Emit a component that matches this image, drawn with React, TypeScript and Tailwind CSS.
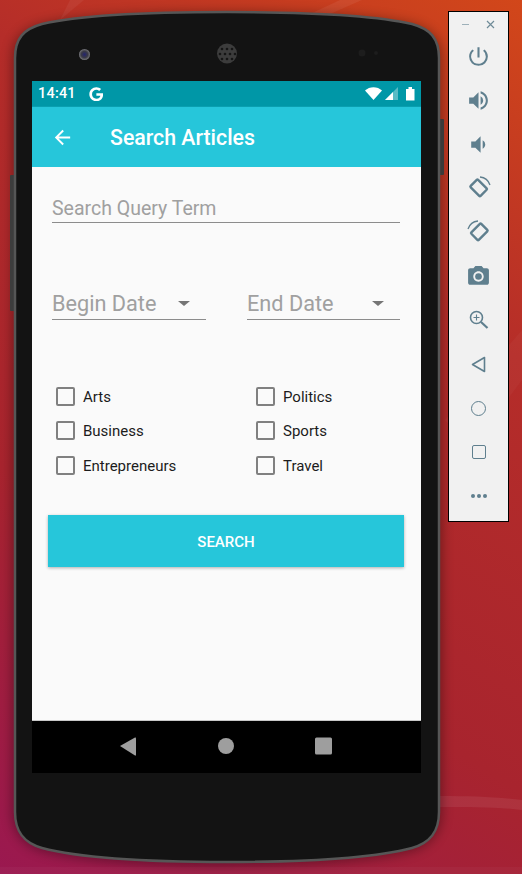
import { MdPowerSettingsNew, MdVolumeUp, MdVolumeDown, MdPhotoCamera, MdArrowBack } from 'react-icons/md';
import { FaGoogle } from 'react-icons/fa';

const TOPICS = [
    ['Arts', 'Politics'],
    ['Business', 'Sports'],
    ['Entrepreneurs', 'Travel'],
];

function PhoneBody() {
    return (
        <svg className="absolute left-0 top-0" width="522" height="874" viewBox="0 0 522 874">
            <defs>
                <radialGradient id="lens">
                    <stop offset="0" stopColor="#24246e" />
                    <stop offset="0.6" stopColor="#3a3a44" />
                    <stop offset="1" stopColor="#77777c" />
                </radialGradient>
                <filter id="soft" x="-10%" y="-10%" width="120%" height="120%">
                    <feGaussianBlur stdDeviation="6" />
                </filter>
            </defs>
            <path
                d="M12 58 C12 38 24 29 42 24 C80 15 150 12 227 12 C304 12 374 15 412 24 C430 29 442 38 442 58 L442 812 C442 832 430 846 412 851 C374 861 304 866 227 866 C150 866 80 861 42 851 C24 846 12 832 12 812 Z"
                fill="#000000"
                opacity="0.35"
                filter="url(#soft)"
            />
            {/* side buttons */}
            <rect x="10" y="175" width="5" height="136" rx="1" fill="#3d3d3d" />
            <rect x="438" y="119" width="6" height="56" rx="1" fill="#3a3a3a" />
            <path
                d="M15 58 C15 38 24 29 42 24 C80 15 150 12 227 12 C304 12 374 15 412 24 C430 29 439 38 439 58 L439 812 C439 832 430 843 412 848 C374 858 304 862 227 862 C150 862 80 858 42 848 C24 843 15 832 15 812 Z"
                fill="#131313"
                stroke="#565656"
                strokeWidth="2.5"
            />
            {/* camera, earpiece, sensors */}
            <circle cx="84.5" cy="54.5" r="5.5" fill="url(#lens)" />
            <circle cx="227" cy="53.5" r="10" fill="#3c3c3c" />
            <g fill="#151515">
                <circle cx="222" cy="49" r="1.3" />
                <circle cx="227" cy="49" r="1.3" />
                <circle cx="232" cy="49" r="1.3" />
                <circle cx="220" cy="54" r="1.3" />
                <circle cx="225" cy="54" r="1.3" />
                <circle cx="230" cy="54" r="1.3" />
                <circle cx="235" cy="54" r="1.3" />
                <circle cx="222" cy="59" r="1.3" />
                <circle cx="227" cy="59" r="1.3" />
                <circle cx="232" cy="59" r="1.3" />
            </g>
            <circle cx="362" cy="53" r="3.5" fill="#1d1d1d" />
            <circle cx="376" cy="53" r="2" fill="#1d1d1d" />
        </svg>
    );
}

function Wallpaper() {
    return (
        <svg className="absolute left-0 top-0" width="522" height="874" viewBox="0 0 522 874">
            <path d="M70 0 L84 0 L60 20 Z" fill="#ffffff" opacity="0.05" />
            <path d="M310 14 L340 0 L362 0 L330 14 Z" fill="#ffffff" opacity="0.06" />
            <path d="M440 796 C470 796 500 797 522 800 L522 810 C500 807 470 807 440 807 Z" fill="#ffffff" opacity="0.07" />
            <path d="M445 420 L522 330 L522 380 L470 450 Z" fill="#ffffff" opacity="0.03" />
            <rect x="0" y="867" width="522" height="7" fill="#ffffff" opacity="0.03" />
        </svg>
    );
}

function StatusIcons() {
    return (
        <svg width="50" height="18" viewBox="0 0 50 18">
            <path d="M0 5.5 C4.5 1 12.5 1 17 5.5 L8.5 15 Z" fill="#ffffff" />
            <path d="M20 15 L33 2 L33 15 Z" fill="#ffffff" opacity="0.35" />
            <path d="M20 15 L28 7 L28 15 Z" fill="#ffffff" />
            <path d="M41 4 L43.5 4 L43.5 2 L47 2 L47 4 L49.5 4 L49.5 15.5 L41 15.5 Z" fill="#ffffff" />
        </svg>
    );
}

function SpinnerField({ label, className }: { label: string; className: string }) {
    return (
        <div className={`flex h-[38px] items-center justify-between border-b border-[#8c8c8c] pr-[16px] pt-[6px] ${className}`}>
            <span className="text-[21.7px] leading-none text-[#a0a0a0]">{label}</span>
            <span className="h-0 w-0 border-x-[6px] border-t-[5px] border-x-transparent border-t-[#757575]" />
        </div>
    );
}

function TopicCheck({ label }: { label: string }) {
    return (
        <div className="flex h-[34.5px] items-center">
            <span className="ml-[4px] h-[19px] w-[19px] rounded-[2px] border-2 border-[#808080]" />
            <span className="ml-[8px] pt-px text-[15px] text-[#1c1c1c]">{label}</span>
        </div>
    );
}

function Screen() {
    return (
        <div className="flex h-[692px] w-[389px] flex-col bg-[#fafafa]">
            <div className="flex h-[26px] items-center justify-between bg-[#0097a7] pl-[6px] pr-[6px] shadow-[inset_0_-1px_0_#0a9fb0]">
                <div className="flex items-center">
                    <span className="text-[14.5px] font-medium tracking-[0.2px] text-white">14:41</span>
                    <FaGoogle className="ml-[13px] text-[14.5px] text-white" />
                </div>
                <StatusIcons />
            </div>
            <div className="flex h-[60px] items-center bg-[#26c6da] pl-[19px]">
                <MdArrowBack className="text-[23px] text-white" />
                <span className="ml-[36px] pt-px text-[21.3px] font-medium text-white">Search Articles</span>
            </div>
            <div className="flex flex-1 flex-col pl-[20px] pr-[21px]">
                <div className="mt-[27px] flex h-[29px] items-center border-b border-[#8c8c8c] pt-[2px] text-[19.5px] text-[#a0a0a0]">
                    Search Query Term
                </div>
                <div className="mt-[59px] flex justify-between">
                    <SpinnerField label="Begin Date" className="w-[154px]" />
                    <SpinnerField label="End Date" className="w-[153px]" />
                </div>
                <div className="mt-[59px] grid grid-cols-[200px_1fr]">
                    {TOPICS.flat().map((topic) => (
                        <TopicCheck key={topic} label={topic} />
                    ))}
                </div>
                <div className="-mx-[4px] mt-[32.5px] flex h-[52px] items-center justify-center bg-[#26c6da] pt-[2px] text-[15px] font-medium text-white shadow-[0_1px_3px_rgba(0,0,0,0.3)]">
                    SEARCH
                </div>
            </div>
            <div className="h-px bg-[#c8c8c8]" />
            <div className="flex h-[52px] items-center bg-black">
                <svg width="389" height="52" viewBox="0 0 389 52">
                    <path d="M88 25 L103 16.5 Q104 16 104 17.5 L104 33.5 Q104 35 103 34.5 Z" fill="#9e9e9e" />
                    <circle cx="194" cy="25" r="8" fill="#9e9e9e" />
                    <rect x="283" y="16.5" width="17" height="17" rx="1.5" fill="#9e9e9e" />
                </svg>
            </div>
        </div>
    );
}

function RotateIcon({ flip }: { flip?: boolean }) {
    return (
        <svg width="24" height="24" viewBox="0 0 24 24" fill="none" stroke="#5f7f8e" className={flip ? '-scale-x-100' : ''}>
            <rect x="4.5" y="6.5" width="14" height="10.5" rx="1" strokeWidth="2.4" transform="rotate(45 11.5 12)" />
            <path d="M13 1 C18 1.5 21.5 4.5 23 9" strokeWidth="1.3" />
        </svg>
    );
}

function ToolSlot({ children }: { children: React.ReactNode }) {
    return <div className="flex h-[44px] items-center justify-center">{children}</div>;
}

function EmulatorToolbar() {
    return (
        <div className="absolute left-[448px] top-[11px] flex h-[511px] w-[61px] flex-col border border-black bg-[#f1f1f1] text-[#5f7f8e]">
            <div className="flex h-[22px] items-center pl-[13px] pt-[3px]">
                <span className="h-[1.5px] w-[7px] bg-[#9db0b9]" />
                <svg className="ml-[17px]" width="9" height="9" viewBox="0 0 9 9" stroke="#6f8b98" strokeWidth="1.2">
                    <path d="M1 1 L8 8 M8 1 L1 8" />
                </svg>
            </div>
            <ToolSlot>
                <MdPowerSettingsNew className="text-[25px]" />
            </ToolSlot>
            <ToolSlot>
                <MdVolumeUp className="text-[25px]" />
            </ToolSlot>
            <ToolSlot>
                <MdVolumeDown className="text-[25px]" />
            </ToolSlot>
            <ToolSlot>
                <RotateIcon />
            </ToolSlot>
            <ToolSlot>
                <RotateIcon flip />
            </ToolSlot>
            <ToolSlot>
                <MdPhotoCamera className="text-[25px]" />
            </ToolSlot>
            <ToolSlot>
                <svg width="20" height="20" viewBox="0 0 20 20" fill="none" stroke="#5f7f8e">
                    <circle cx="7.5" cy="7.5" r="6" strokeWidth="1.6" />
                    <path d="M12 12 L18.5 18" strokeWidth="2.2" />
                    <path d="M7.5 4.5 V10.5 M4.5 7.5 H10.5" strokeWidth="1.1" />
                </svg>
            </ToolSlot>
            <ToolSlot>
                <svg width="16" height="17" viewBox="0 0 16 17" fill="none" stroke="#5f7f8e" strokeWidth="1.6" strokeLinejoin="round">
                    <path d="M1.5 8.5 L13.5 1.5 L13.5 15.5 Z" />
                </svg>
            </ToolSlot>
            <ToolSlot>
                <span className="h-[15px] w-[15px] rounded-full border-[1.7px] border-[#5f7f8e]" />
            </ToolSlot>
            <ToolSlot>
                <span className="h-[14px] w-[14px] rounded-[2px] border-[1.7px] border-[#5f7f8e]" />
            </ToolSlot>
            <ToolSlot>
                <span className="flex gap-[2px]">
                    <span className="h-[4px] w-[4px] rounded-full bg-[#5f7f8e]" />
                    <span className="h-[4px] w-[4px] rounded-full bg-[#5f7f8e]" />
                    <span className="h-[4px] w-[4px] rounded-full bg-[#5f7f8e]" />
                </span>
            </ToolSlot>
        </div>
    );
}

export default function App() {
    return (
        <div className="relative h-[874px] w-[522px] overflow-hidden bg-[linear-gradient(212deg,#d2471a_0%,#b52d29_30%,#a8242e_66%,#9a1850_100%)] font-['Roboto',sans-serif]">
            <Wallpaper />
            <PhoneBody />
            <div className="absolute left-[32px] top-[81px]">
                <Screen />
            </div>
            <EmulatorToolbar />
        </div>
    );
}
